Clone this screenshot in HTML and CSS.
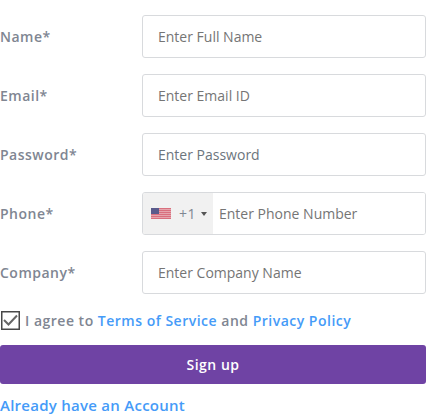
FILE: index.html
```
<!DOCTYPE html>
<html lang="en">
<head>
<meta charset="utf-8">
<title>Sign up</title>
<link rel="stylesheet" href="styles.css">
</head>
<body>
<form class="signup">
  <div class="row"><label class="label" for="name">Name*</label><input class="field" id="name" placeholder="Enter Full Name"></div>
  <div class="row"><label class="label" for="email">Email*</label><input class="field" id="email" placeholder="Enter Email ID"></div>
  <div class="row"><label class="label" for="password">Password*</label><input class="field password" id="password" type="password" placeholder="Enter Password"></div>
  <div class="row"><label class="label" for="phone">Phone*</label>
    <div class="field phone">
      <div class="country">
        <svg class="flag" viewBox="0 0 20 11" width="20" height="11"><path fill="#e5a5ad" d="M0 0h20v11H0z"/><path fill="#d9707e" d="M0 0h20v1H0zM0 2h20v1H0zM0 4h20v1H0zM0 6h20v1H0zM0 8h20v1H0zM0 10h20v1H0z"/><path fill="#5a5b8c" d="M0 0h8v6H0z"/></svg>
        <span class="code">+1</span><span class="arrow"></span>
      </div>
      <input class="number" id="phone" placeholder="Enter Phone Number">
    </div>
  </div>
  <div class="row"><label class="label" for="company">Company*</label><input class="field" id="company" placeholder="Enter Company Name"></div>
  <div class="agree">
    <svg class="check" viewBox="0 0 21 21" width="21" height="21"><path d="M1.750 1.750h17.500v17.500H1.750z" fill="#fff" stroke="#484848" stroke-width="1.500"/><path d="M4 10l4.500 4.500L17 5.500" fill="none" stroke="#666" stroke-width="2"/></svg>
    <span>I agree to <a href="#">Terms of Service</a> and <a href="#">Privacy Policy</a></span>
  </div>
  <button class="submit" type="button">Sign up</button>
  <a class="login" href="#">Already have an Account</a>
</form>
</body>
</html>
```
FILE: styles.css
```
* { box-sizing: border-box; }
body { margin: 0; background: #fff; font-family: "Open Sans", sans-serif; font-size: 14px; overflow: hidden; }
.signup { width: 426px; padding-top: 15px; }
.row { display: flex; align-items: center; height: 43px; margin-bottom: 16px; }
.label { width: 142px; color: #808692; font-weight: 600; letter-spacing: .5px; }
.field { width: 284px; height: 43px; padding: 0 15px; border: 1px solid #d8dadd; border-radius: 3px; background: #fff; font: 14px "Open Sans", sans-serif; outline: 0; }
input::placeholder { color: #757575; opacity: 1; }
.password::placeholder { color: #6c757d; }
.phone { display: flex; padding: 0; overflow: hidden; }
.country { display: flex; align-items: center; width: 70px; background: #f1f1f1; padding-left: 8px; color: #808692; }
.code { margin-left: 8px; letter-spacing: .5px; }
.arrow { margin-left: 5px; border: 3px solid transparent; border-top: 4px solid #555; border-bottom: 0; }
.number { width: 212px; border: 0; padding: 0 6px; font: inherit; outline: 0; }
.agree { display: flex; align-items: center; height: 21px; gap: 4px; color: #808692; font-weight: 600; letter-spacing: .5px; white-space: nowrap; }
a { color: #459bf8; text-decoration: none; }
.submit { display: block; width: 426px; height: 39px; margin-top: 14px; padding: 0; border: 0; border-radius: 3px; background: #6f43a4; color: #fff; font: 600 14px "Open Sans", sans-serif; letter-spacing: .5px; }
.login { display: block; margin-top: 11px; font-size: 15px; font-weight: 600; line-height: 20px; letter-spacing: .26px; }
```
